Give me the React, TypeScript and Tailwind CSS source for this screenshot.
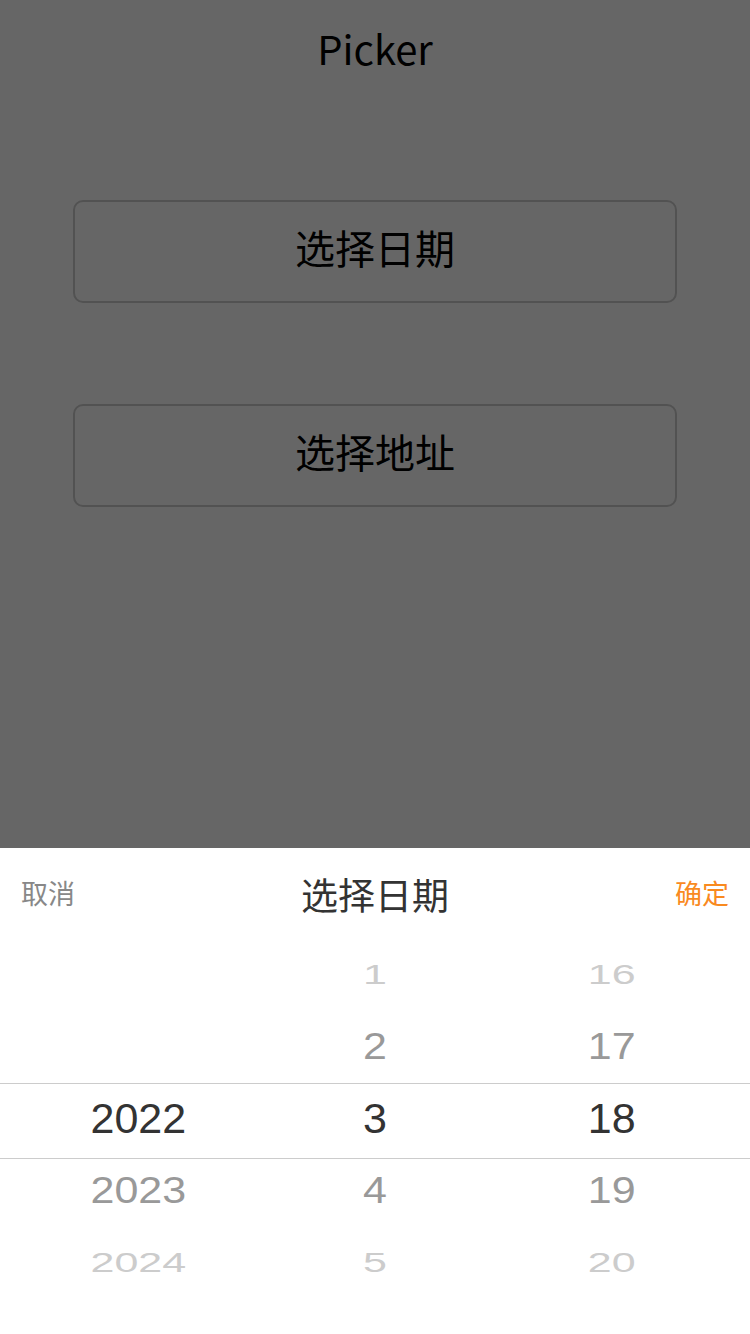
import React from "react";

const cjk = "font-['Noto_Sans_CJK_SC','Noto_Sans',sans-serif]";
const num = "font-['Liberation_Sans','Noto_Sans_CJK_SC',sans-serif]";

const years = ["", "", "2022", "2023", "2024"];
const months = ["1", "2", "3", "4", "5"];
const days = ["16", "17", "18", "19", "20"];

// look of each wheel row, from top to bottom
const rowLook = [
  "scale-y-[0.64] text-[#cccccc]",
  "scale-y-[0.86] text-[#999999]",
  "text-[#333333]",
  "scale-y-[0.84] text-[#999999]",
  "scale-y-[0.64] text-[#cccccc]",
];

const Column = ({ items }: { items: string[] }) => {
  return (
    <div className="flex flex-1 flex-col">
      {items.map((item, i) => (
        <div key={i} className="flex h-[72px] items-center justify-center">
          <span className={`inline-block text-[43px] leading-none ${num} ${rowLook[i]}`}>
            {item}
          </span>
        </div>
      ))}
    </div>
  );
};

const App = () => {
  return (
    <div className={`relative h-[1334px] w-full overflow-hidden bg-white ${cjk}`}>
      {/* page under the mask */}
      <div className="flex flex-col items-center">
        <div className="flex h-[96px] items-center justify-center text-[40px] text-black">
          Picker
        </div>
        <div className="mt-[104px] flex w-[604px] flex-col gap-[101px]">
          <button className="flex h-[103px] items-center justify-center rounded-[10px] border-2 border-[#cdcdcd] bg-white pb-[10px] text-[40px] text-black">
            选择日期
          </button>
          <button className="flex h-[103px] items-center justify-center rounded-[10px] border-2 border-[#cdcdcd] bg-white pb-[10px] text-[40px] text-black">
            选择地址
          </button>
        </div>
      </div>

      {/* mask */}
      <div className="absolute inset-0 bg-black/60" />

      {/* bottom sheet */}
      <div className="absolute bottom-0 left-0 right-0 flex h-[486px] flex-col bg-white">
        <div className="flex h-[90px] items-center justify-between px-[21px]">
          <span className="text-[27px] text-[#888888]">取消</span>
          <span className="pt-[4px] text-[37px] text-[#333333]">选择日期</span>
          <span className="text-[27px] text-[#f98a1f]">确定</span>
        </div>
        <div className="relative flex h-[360px] px-[20px]">
          <Column items={years} />
          <Column items={months} />
          <Column items={days} />
          <div className="pointer-events-none absolute left-0 right-0 top-[145px] h-[76px] border-y border-[#cccccc]" />
        </div>
      </div>
    </div>
  );
};

export default App;
